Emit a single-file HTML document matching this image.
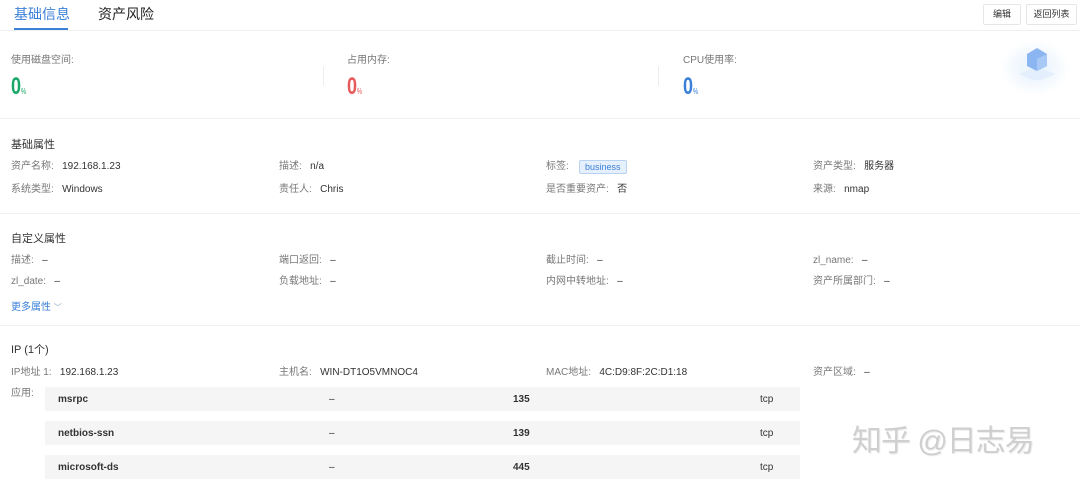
<!DOCTYPE html>
<html><head><meta charset="utf-8"><style>
*{margin:0;padding:0;box-sizing:border-box}
body{width:1080px;height:486px;background:#fff;position:relative;overflow:hidden;font-family:"Liberation Sans","Noto Sans CJK SC",sans-serif;font-size:10px;color:#333}
.a{position:absolute;white-space:nowrap;line-height:14px;margin-top:2px}
.l{color:#777}
.h{font-size:11px;color:#333}
.hr{position:absolute;height:1px;background:#f0f0f0;left:0;width:1080px}
.row{position:absolute;left:45px;width:755px;height:24px;background:#f5f5f5}
.row span{position:absolute;top:6px;line-height:14px}
.big{position:absolute;font-size:24px;font-weight:bold;line-height:24px;transform:scaleX(.75);transform-origin:left}
</style></head><body>
<div class="a" style="left:14px;top:3px;font-size:14px;line-height:18px;color:#3a7fd8">基础信息</div>
<div style="position:absolute;left:14px;top:28px;width:54px;height:2px;background:#3a7fd8"></div>
<div class="a" style="left:98px;top:3px;font-size:14px;line-height:18px;color:#222">资产风险</div>
<div class="hr" style="top:30px"></div>
<div class="a" style="left:983px;top:2px;width:38px;height:21px;border:1px solid #e6e6e6;border-radius:2px;text-align:center;line-height:19px;font-size:9px">编辑</div>
<div class="a" style="left:1026px;top:2px;width:51px;height:21px;border:1px solid #e6e6e6;border-radius:2px;text-align:center;line-height:19px;font-size:9px">返回列表</div>

<div class="a l" style="left:11px;top:52px">使用磁盘空间:</div>
<div class="a l" style="left:347px;top:52px">占用内存:</div>
<div class="a l" style="left:683px;top:52px">CPU使用率:</div>
<div style="position:absolute;left:323px;top:66px;width:1px;height:20px;background:#eee"></div>
<div style="position:absolute;left:658px;top:66px;width:1px;height:20px;background:#eee"></div>
<div class="big" style="left:11px;top:75px;color:#1aa86a">0<span style="font-size:8px;font-weight:normal">%</span></div>
<div class="big" style="left:347px;top:75px;color:#e85a5a">0<span style="font-size:8px;font-weight:normal">%</span></div>
<div class="big" style="left:683px;top:75px;color:#3a7fd8">0<span style="font-size:8px;font-weight:normal">%</span></div>
<div style="position:absolute;left:1000px;top:40px;width:70px;height:56px;background:radial-gradient(ellipse,#edf5fd 25%,#fff 70%)"></div>
<svg style="position:absolute;left:1005px;top:44px" width="60" height="36"><polygon points="14,30 32,22 50,30 32,38" fill="#e3effc"/><polygon points="22,10 32,4 42,10 42,22 32,27 22,22" fill="#8cb6f2"/><polygon points="32,15 42,10 42,22 32,27" fill="#a8c8f5"/></svg>
<div class="hr" style="top:118px"></div>

<div class="a h" style="left:11px;top:136px">基础属性</div>
<div class="a"style="left:11px;top:158px"><span class="l">资产名称:</span>&nbsp;&nbsp;&nbsp;192.168.1.23</div>
<div class="a" style="left:279px;top:158px"><span class="l">描述:</span>&nbsp;&nbsp;&nbsp;n/a</div>
<div class="a" style="left:546px;top:158px"><span class="l">标签:</span></div>
<div class="a" style="left:579px;top:158px;height:14px;line-height:12px;padding:0 5px;background:#e6f0fc;border:1px solid #b8d2f2;color:#3a7fd8;font-size:9px;border-radius:2px">business</div>
<div class="a" style="left:813px;top:158px"><span class="l">资产类型:</span>&nbsp;&nbsp;&nbsp;服务器</div>
<div class="a" style="left:11px;top:181px"><span class="l">系统类型:</span>&nbsp;&nbsp;&nbsp;Windows</div>
<div class="a" style="left:279px;top:181px"><span class="l">责任人:</span>&nbsp;&nbsp;&nbsp;Chris</div>
<div class="a" style="left:546px;top:181px"><span class="l">是否重要资产:</span>&nbsp;&nbsp;&nbsp;否</div>
<div class="a" style="left:813px;top:181px"><span class="l">来源:</span>&nbsp;&nbsp;&nbsp;nmap</div>
<div class="hr" style="top:213px"></div>

<div class="a h" style="left:11px;top:230px">自定义属性</div>
<div class="a" style="left:11px;top:252px"><span class="l">描述:</span>&nbsp;&nbsp;&nbsp;–</div>
<div class="a" style="left:279px;top:252px"><span class="l">端口返回:</span>&nbsp;&nbsp;&nbsp;–</div>
<div class="a" style="left:546px;top:252px"><span class="l">截止时间:</span>&nbsp;&nbsp;&nbsp;–</div>
<div class="a" style="left:813px;top:252px"><span class="l">zl_name:</span>&nbsp;&nbsp;&nbsp;–</div>
<div class="a" style="left:11px;top:273px"><span class="l">zl_date:</span>&nbsp;&nbsp;&nbsp;–</div>
<div class="a" style="left:279px;top:273px"><span class="l">负载地址:</span>&nbsp;&nbsp;&nbsp;–</div>
<div class="a" style="left:546px;top:273px"><span class="l">内网中转地址:</span>&nbsp;&nbsp;&nbsp;–</div>
<div class="a" style="left:813px;top:273px"><span class="l">资产所属部门:</span>&nbsp;&nbsp;&nbsp;–</div>
<div class="a" style="left:11px;top:299px;color:#3a7fd8">更多属性 <span style="font-size:8px;color:#8ab">﹀</span></div>
<div class="hr" style="top:325px"></div>

<div class="a h" style="left:11px;top:341px">IP (1个)</div>
<div class="a" style="left:11px;top:364px"><span class="l">IP地址 1:</span>&nbsp;&nbsp;&nbsp;192.168.1.23</div>
<div class="a" style="left:279px;top:364px"><span class="l">主机名:</span>&nbsp;&nbsp;&nbsp;WIN-DT1O5VMNOC4</div>
<div class="a" style="left:546px;top:364px"><span class="l">MAC地址:</span>&nbsp;&nbsp;&nbsp;4C:D9:8F:2C:D1:18</div>
<div class="a" style="left:813px;top:364px"><span class="l">资产区域:</span>&nbsp;&nbsp;&nbsp;–</div>
<div class="a l" style="left:11px;top:385px">应用:</div>
<div class="row" style="top:387px"><span style="left:13px;font-weight:bold">msrpc</span><span style="left:284px">–</span><span style="left:468px;font-weight:bold">135</span><span style="left:715px">tcp</span></div>
<div class="row" style="top:421px"><span style="left:13px;font-weight:bold">netbios-ssn</span><span style="left:284px">–</span><span style="left:468px;font-weight:bold">139</span><span style="left:715px">tcp</span></div>
<div class="row" style="top:455px"><span style="left:13px;font-weight:bold">microsoft-ds</span><span style="left:284px">–</span><span style="left:468px;font-weight:bold">445</span><span style="left:715px">tcp</span></div>
<div class="a" style="left:852px;top:423px;font-size:30px;line-height:34px;letter-spacing:-1px;color:#cfcfcf;text-shadow:1px 1px 0 #eee">知乎 @日志易</div>
</body></html>
